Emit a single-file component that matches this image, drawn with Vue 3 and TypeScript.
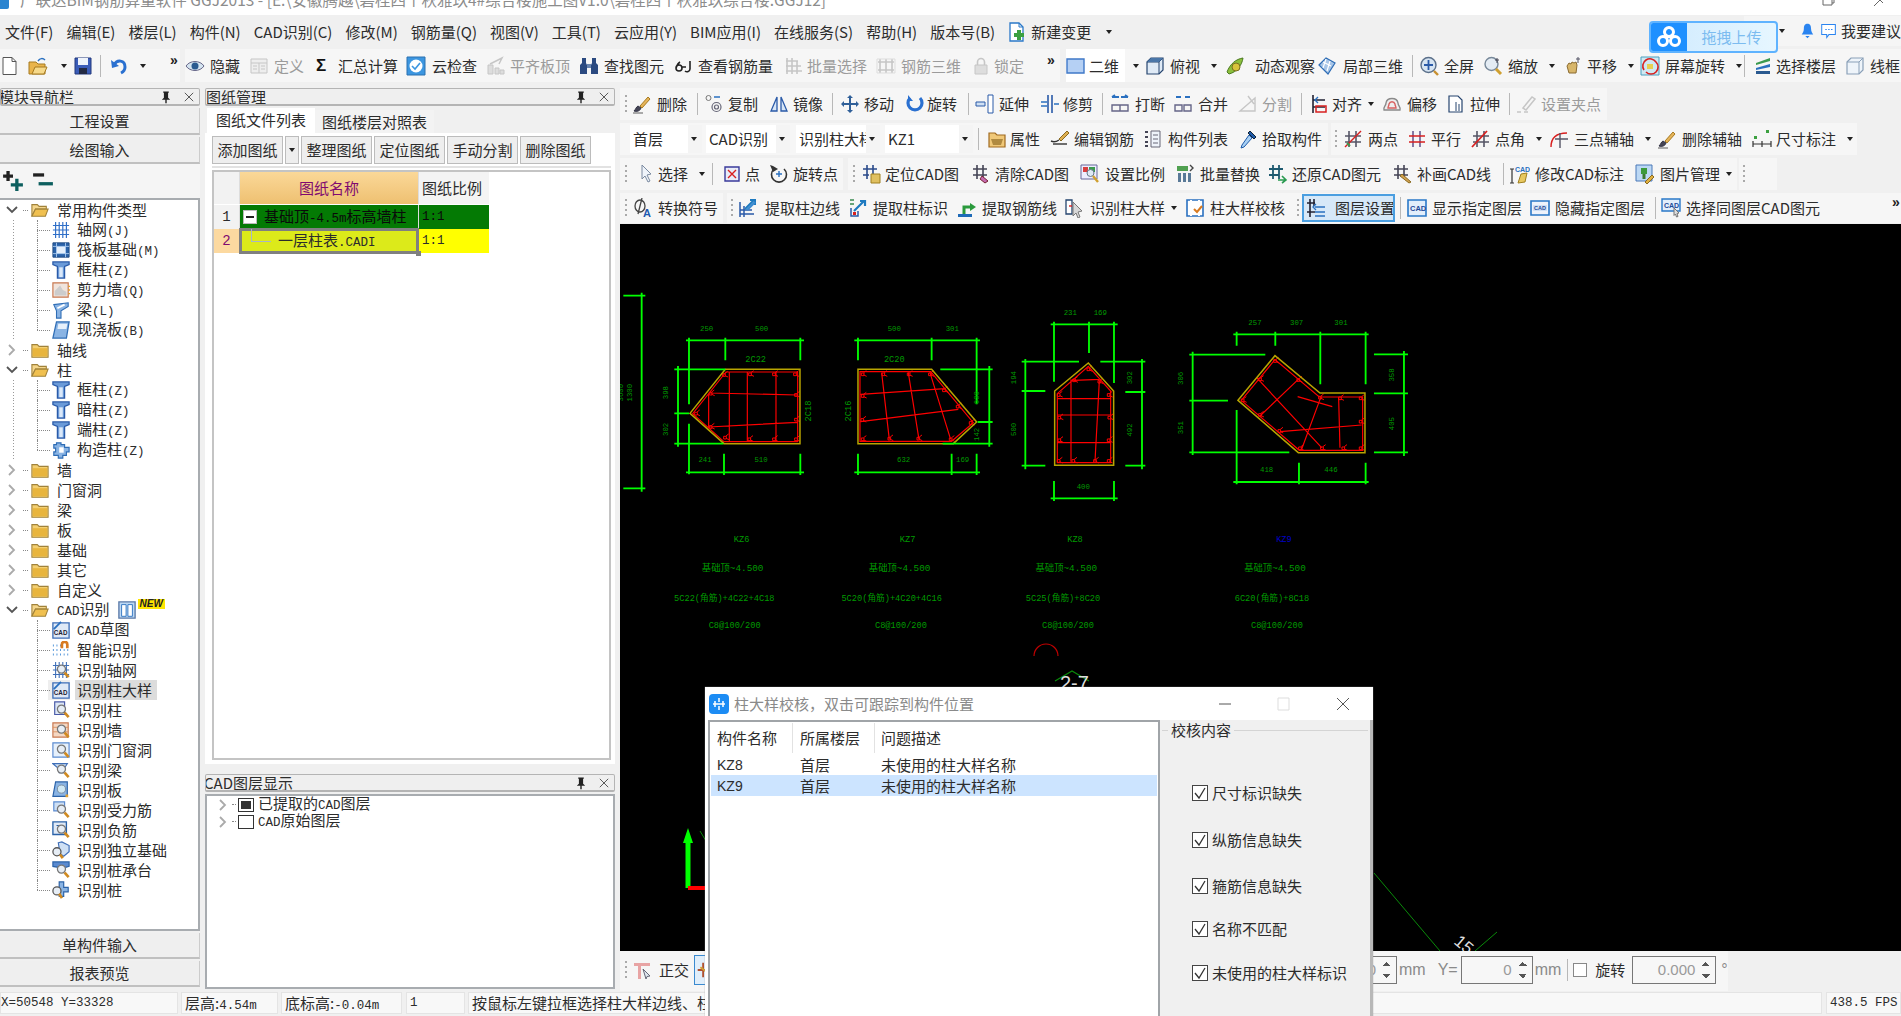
<script setup lang="ts">
import { h } from 'vue'

type Shape = (string | number)[]
const p = (d: string, f = '', s = '', w = 1): Shape => [d, f, s, w]
const txt = (x: number, y: number, size: number, t: string, f: string): Shape => ['T', x, y, size, t, f]

const B = '#2f6db5'
const O = '#e0a030'
const R = '#d82020'
const G = '#c6c6c6'
const lens = [p('M6 9a4.5 4.5 0 1 0 9 0a4.5 4.5 0 1 0-9 0z', '#e6edf5', '#777', 1.4), p('M14 13l4.5 5', '', '#d08a20', 3)]
const brush = [p('M2 17c3 1 6 0 7-3l-3-2c-2 1-2 3-4 5z', '#445', '#334'), p('M8 12l8-9 2 2-8 9z', '#e6b45a', '#a67a20'), p('M1 19h10', '', '#888', 1.4)]
const hash = (c: string) => [p('M6 2v16M13 2v16M2 7h16M2 13h16', '', c, 1.6)]

const icons: Record<string, Shape[]> = {
  new: [p('M3 1.5h9l4 4v13H3z', '#fff', '#555'), p('M12 1.5v4h4', '', '#555')],
  change: [p('M3 1h9l4 4v14H3z', '#fff', '#2a78c8', 1.3), p('M12 1v4h4', '', '#2a78c8'), p('M10 8h4v3h3v4h-3v3h-4v-3H7v-4h3z', '#3ca040')],
  pin: [p('M6 2h8v2h-1v7l3 3h-5v5H9v-5H4l3-3V4H6z', '#222')],
  close: [p('M4 4l12 12M16 4L4 16', '', '#555', 1.4)],
  open: [p('M1 6h7l2 2h7v10H1z', '#e9b44c', '#a67a20'), p('M4 18l3-7h12l-3 7z', '#f6d98a', '#a67a20'), p('M10 5c2-3 5-3 7-1', '', '#2a70c0', 1.5)],
  save: [p('M2 2h16v16H2z', '#3a5cb8', '#23397c'), p('M5 2h10v7H5z', '#eef3fb'), p('M6 12h8v6H6z', '#222a44')],
  undo: [p('M5 9c3-6 11-5 11 2 0 3-2 5-4 6', '', '#2a70d0', 3), p('M2 4l1 8 7-2z', '#2a70d0')],
  eye: [p('M1 10c4-6 14-6 18 0-4 6-14 6-18 0z', '#d5e4f0', '#668'), p('M6.5 10a3.5 3.5 0 1 0 7 0a3.5 3.5 0 1 0-7 0z', '#2a5a90')],
  def: [p('M2 3h16v14H2z', '#eee', G), p('M2 7h16M10 7v10M12 10h4M12 13h4M4 10h4M4 13h4', '', G)],
  cloud: [p('M1 1h18v18H1z', '#3c96e0', '#2a70b0'), p('M3.5 10a6.5 6.5 0 1 0 13 0a6.5 6.5 0 1 0-13 0z', '#fff'), p('M6 10l3 3 5-6', '', '#3c96e0', 1.6)],
  flat: [p('M2 18V9h5v9zM9 18v-6h4v6zM14 18v-4h4v4z', '#ddd', G), p('M4 8l12-6-3 6', '', G, 1.5)],
  find: [p('M3 2h4v5l1 2v9H1V9l2-2zM13 2h4v5l2 2v9h-7V9l1-2z', '#2b4a80'), p('M8 8h4v4H8z', '#6a86b0')],
  viewrebar: [p('M2 12a3 3 0 1 0 6 0a3 3 0 1 0-6 0M6 6c-2 1-3 3-4 6M8 11h4M16 5v8a3 3 0 0 1-5 2', '', '#222', 1.6)],
  batch: [p('M3 2v16M8 2v16M13 5v13M2 5h12M2 10h15M2 15h16', '', G, 1.6)],
  rebar3: [p('M4 3v14M10 3v14M16 3v14M2 6h16M2 14h16', '', G, 1.6), p('M1 3h18v14H1z', '', '#ddd')],
  lock: [p('M4 9h12v9H4z', '#ddd', G), p('M6.5 9V6a3.5 3.5 0 0 1 7 0v3', '', G, 1.6)],
  rect: [p('M1 3h17v14H1z', '#b5d0f4', '#3f78c8', 1.4)],
  box: [p('M2 6l4-4h12v12l-4 4H2z', '#dfeaf6', '#26456f', 1.2), p('M2 6h12v12M14 6l4-4', '', '#26456f'), p('M2 6l4-4h12l-4 4z', '#4a76a8')],
  orbit: [p('M2 16c3-8 9-13 16-14-1 7-6 14-14 16z', '#8cbf3c', '#4a7a20'), p('M7 11a4 4 0 1 0 8 0a4 4 0 1 0-8 0z', '#d8c33c', '#7a7020')],
  local3d: [p('M2 9l7-7 9 5-7 11z', '#a8c6e8', B, 1.2), p('M6 6l8 4M9 3l-3 9M13 5l-3 10', '', '#fff', 1.2)],
  full: [p('M2 9a7.5 7.5 0 1 0 15 0a7.5 7.5 0 1 0-15 0z', '#d6e4f2', '#5a6f8a', 1.4), p('M9.5 4v10M5 9h9', '', '#2a5aa8', 1.8), p('M15 15l4 4', '', '#c89030', 2.4)],
  zoom: [p('M2 8a6.5 6.5 0 1 0 13 0a6.5 6.5 0 1 0-13 0z', '#e4ecf4', '#789', 1.4), p('M13 13l5 5', '', '#d0a030', 3), p('M14 2v5M12 4h4', '', '#445')],
  hand: [p('M4 10l2-3 2 1 1-2 2 1 2-1 1 3-1 8H6z', '#d8b66a', '#8a6a30'), p('M15 1v6M13 3h4', '', '#556')],
  screen: [p('M1 1h18v18H1z', '#cfe8f2', '#4aa0c0'), p('M4 14a7 7 0 0 1 12-8M16 6a7 7 0 0 1-10 10', '', R, 1.6), p('M7 8h6v5H7z', '#e8d050')],
  layers: [p('M3 7l14-5v3L3 9z', '#3c9a50'), p('M3 12l14-4v3L3 14z', '#2a70c0'), p('M3 15h14v3H3z', '#2a5a90')],
  wire: [p('M2 6l4-4h12v12l-4 4H2z', '#eef4fa', '#8aa0b8', 1.2), p('M2 6h12v12M14 6l4-4', '', '#8aa0b8')],
  brush,
  brushg: brush,
  copy: [p('M3 4a2.5 2.5 0 1 0 5 0a2.5 2.5 0 1 0-5 0z', '', '#777'), p('M9 13a4.5 4.5 0 1 0 9 0a4.5 4.5 0 1 0-9 0zM11.500 13a2 2 0 1 0 4 0a2 2 0 1 0-4 0z', '', '#667', 1.2), p('M11 3h6', '', '#2a70c0', 1.5)],
  mirror: [p('M8 3v14H2zM12 3v14h6z', '#d8e6f6', '#2a5aa8', 1.3)],
  move: [p('M10 1l3 3h-2v5h5V7l3 3-3 3v-2h-5v5h2l-3 3-3-3h2v-5H4v2l-3-3 3-3v2h5V4H7z', '#2f5f98')],
  rotate: [p('M5 4a7 7 0 1 0 10 0', '', '#2a70d0', 3.2), p('M3 1v6h5z', '#2a70d0')],
  extend: [p('M1 8h9v4H1z', '#cfe0f4', '#2a5aa8'), p('M13 1h5v18h-5z', '#fff', '#2a5aa8')],
  trim: [p('M8 1v18M12 1v18', '', '#2a5aa8', 1.6), p('M1 8h6M1 12h6M14 10h5', '', '#2a70c0', 1.4)],
  break: [p('M2 3h7M11 3h7M2 3l3-2M18 3l-3-2', '', '#2a70c0', 1.8), p('M2 11h16v6H2zM10 11v6', '', '#668', 1.4)],
  merge: [p('M3 3l5 0M12 3h5', '', '#2a70c0', 1.8), p('M2 11h7v6H2zM11 11h7v6h-7z', '', '#668', 1.4)],
  split: [p('M2 17h15V4L2 17zM10 2l6 8', '', G, 1.4)],
  align: [p('M3 1v18M3 6h12M3 13h12', '', '#223', 1.6), p('M6 12h10v6H6z', '', R, 1.5), p('M8 3l-3 3 3 3', '', '#2a70c0', 1.4)],
  offset: [p('M2 16c-1-3 2-4 2-7 1-6 11-6 12 0 0 3 3 4 2 7z', '#eee', '#8a8a8a', 1.4), p('M6 14c0-2 1-2 1-4 1-3 5-3 6 0 0 2 1 2 1 4z', '', '#d86060', 1.4)],
  stretch: [p('M3 2h9l4 4v12H3z', '#fff', '#26456f', 1.2), p('M10 8v9M13 10v7', '', '#26456f', 1)],
  gripset: [p('M1 18h4M8 18h4M7 14L16 3l3 2-9 11z', '', G, 1.5)],
  prop: [p('M2 4h6l2 2h8v12H2z', '#f0c878', '#a06a20', 1.2), p('M4 10h12l-2 6H6z', '#b08a40')],
  edit: [p('M1 12c2 1 5 1 8-1', '', '#333', 1.4), p('M9 10l8-8 2 2-8 8z', '#e0b050', '#8a6a20'), p('M3 15h14', '', '#333', 1.4)],
  list: [p('M2 3h3M2 8h3M2 13h3M2 17h3', '', '#445', 2), p('M8 2h9v16H8z', '#eef3fa', '#667'), p('M10 6h5M10 10h5M10 14h5', '', '#667')],
  pick: [p('M12 2l6 6-2 2-6-6z', '#1e5aa8', '#123'), p('M11 6l3 3-8 9-3 1 1-3z', '#a8d0f4', '#1e5aa8')],
  two: [...hash('#556'), p('M2 18L18 2', '', '#d82020', 1.5), p('M4 14l3 3', '', '#3c9a50', 2)],
  parallel: [p('M6 2v16M13 2v16', '', '#6a5a90', 1.6), p('M2 7h16M2 13h16', '', R, 1.6)],
  angle: [...hash('#556'), p('M1 18L16 2', '', R, 1.8)],
  three: [p('M2 18c0-9 5-14 16-14', '', R, 1.4), p('M11 4v15M6 10h13', '', '#556', 1.4)],
  dim: [p('M2 7h3v3H2zM14 1h3v3h-3z', '#3ca040'), p('M1 15h18M1 12v6M10 12v6M19 12v6', '', '#333', 1.2)],
  cursor: [p('M5 1l9 9-4 1 3 6-2 1-3-6-3 3z', '#eef3fa', '#7a8aa0')],
  point: [p('M3 3h14v14H3z', '#e8ecf8', '#3a3a9a', 1.4), p('M6 6l8 8M14 6l-8 8', '', R, 1.4)],
  rotpt: [p('M5 5a7.500 7.500 0 1 0 10 0', '', '#333', 1.6), p('M1 1l3 1 5 3-5 3z', '#333'), p('M10 7v6M7 10h6', '', '#2a70c0', 1.4)],
  locate: [p('M5 1v14M11 1v14M1 5h14M1 11h6', '', '#2a4a8a', 1.6), p('M9 10h9v9H9z', '#e0c060', '#a08020')],
  clear: [p('M5 1v14M11 1v14M1 5h14M1 11h14', '', '#445', 1.6), p('M10 12l6 5-3 2-5-4z', '#c46ab0', '#723')],
  scale: [p('M1 1h16v14H1z', '#eef', '#669'), p('M3 3h5v5H3z', '#d84040'), p('M9 3h6v5H9z', '#3c9a50'), p('M7 9a3.500 3.500 0 1 0 7 0a3.500 3.500 0 1 0-7 0z', '#dfeaf6', '#678'), p('M13 12l5 6', '', '#d0a030', 2.4)],
  replace: [p('M2 2h11v5H2z', '#50a050'), p('M3 9h3v9H3zM8 9h3v9H8zM13 9h3v9h-3z', '#5a7a98'), p('M15 1l3 3-3 3', '', '#444', 1.4)],
  restore: [p('M5 1v14M11 1v14M1 5h14M1 11h10', '', '#1e5a70', 1.8), p('M10 16h8M14 12l4 4-4 3', '', '#2a9a50', 1.6)],
  patch: [p('M5 1v14M11 1v14M1 5h14M1 11h14', '', '#445', 1.6), p('M9 10l9 8-2 1-9-7z', '#d0a050', '#8a6a20')],
  modcad: [p('M2 5v14M0 5h4M0 19h4', '', '#333', 1.2), txt(5, 8, 7, 'CAD', '#2a70c0'), p('M8 19l3-9 6-1-2 9z', '#e8c860', '#a08020')],
  pics: [p('M1 1h16v16H1z', '#bcd8f4', '#4a78b8'), p('M6 4h6v6H6z', '#3c9a3c'), p('M9 10v5', '', '#3c7a30', 3), p('M10 18l7-7 2 2-7 7z', '#e0b040', '#8a6a20')],
  phi: [p('M2 8a5 6 0 1 0 10 0a5 6 0 1 0-10 0zM9 0L5 16', '', '#444', 1.3), txt(10, 19, 11, 'A', '#1e5ab0')],
  pull1: [p('M2 19V4M6 19V8M2 12h12M2 16h14', '', '#2a5aa8', 1.5), p('M7 11L16 2M12 2h5v5', '', '#1e7ac0', 2), p('M9 12l8-8', '', '#3a8ad0', 2.4)],
  pull2: [p('M2 2h4M2 6h4', '', '#3a8a50', 1.4), p('M3 10v8h7v-5', '', '#2a5aa8', 1.5), p('M6 13L16 3M12 3h5v5', '', '#1e7ac0', 2.2), p('M5 14h3v3H5z', R)],
  pull3: [p('M1 16h14v3H1z', '#1e6ab8'), p('M7 16V9h7', '', '#2a9a3c', 3), p('M13 5l6 4-6 4z', '#2a9a3c')],
  ident: [p('M2 2h6v14H2z', '#fff', '#26456f', 1.3), p('M5 8h3', '', R, 1.4), p('M9 4l9 9-4 1 2 5-2 1-2-5-3 3z', '#d8d8d8', '#777')],
  check: [p('M2 2h16v16H2z', '#fff', '#2a70c0', 1.6), p('M6 2v3M14 2v3M6 15v3M14 15v3', '', '#fff', 2), p('M9 11l3 3 5-6', '', '#d87a20', 2)],
  layerset: [p('M4 1v18M8 1v7M1 5h8M1 14h8', '', '#223', 1.6), p('M10 6l-3 3 3 3M9 9h10M9 14h10M9 18h10', '', '#2a70c0', 1.3)],
  showcad: [p('M1 2h18v16H1z', '#e2eefb', '#2a78c8', 1.6), txt(3, 13, 7.5, 'CAD', '#1e4a98')],
  hidecad: [p('M1 3h18v14H1z', '#eef3fb', '#2a78c8', 1.6), p('M3 7h14v6H3z', '#d0e0f4'), txt(4, 12, 5.5, 'CAD', '#1e4a98')],
  selcad: [p('M1 1h18v12H1z', '#e2eefb', '#2a78c8', 1.4), txt(3, 10, 7, 'CAD', '#1e4a98'), p('M13 10l5 5-2 .5 1 3-1.500 .5-1-3-1.500 1.500z', '#ddd', '#777')],
  ortho: [p('M1 3h16v3H8v13H5V6H1z', '#e8a4a4'), p('M10 9l7 7-3 .5-1 2.500z', '#dfe8f0', '#667')],
  toggle: [p('M9 2v16M3 10h8', '', '#b05030', 2), p('M6 7l8 6', '', '#d0a030', 2)],

  folderClosed: [p('M1 4h6l2 2h10v12H1z', '#f3cf72', '#a0823a', 1.2), p('M2 8h16v9H2z', '#e8b53e')],
  folderOpen: [p('M1 4h6l2 2h8v3H5L1 17z', '#f4d68c', '#a0823a', 1.2), p('M5 9h14l-3 8H1z', '#f0c050', '#a0823a', 1.2)],
  tAxis: [p('M4 1v18M8 1v18M12 1v18M16 1v18M1 5h18M1 10h18M1 15h18', '', '#2f6fc8', 1.3)],
  tRaft: [p('M1 2h18v16H1z', '#2a62a8', '#1e4a80'), p('M5 6h10v8H5z', '#e6f0fb'), p('M1 6h18M1 14h18M5 2v16M15 2v16', '', '#a9c9ee', 1)],
  tCol: [p('M1 1h18v3l-5 2v13H6V6L1 4z', '#6a9ad8', '#2a5aa8', 1.4), p('M8 7h4v11H8z', '#dbe9fa')],
  tWall: [p('M1 2h17v16H1z', '#f0e4dc', '#c87850', 1.3), p('M3 16h13v-4l-4-2-3-5-6 6z', '#ccc'), p('M18 6h2M18 10h2M18 14h2', '', O, 1.5)],
  tBeam: [p('M2 4l16-2v4l-8 5v8H5v-8z', '#8ab4e4', B, 1.2), p('M6 8l8-4', '', '#fff', 2)],
  tSlab: [p('M5 1h14l-3 18H1z', '#8ab4e4', B, 1.4), p('M7 3h10l-1 6H6z', '#e6f0fb')],
  tStruct: [p('M5 2h5v2h4v3h5v5h-3v4h-4v3H7v-3H2v-4h2V8H2V4h3z', '#8ab4e4', B, 1.3), p('M8 7h5v6H8z', '#fff')],
  tCad: [p('M1 2h18v17H1z', '#dfe9f6', '#3f6fb8', 1.5), txt(2, 16, 7, 'CAD', '#223'), p('M2 9l8-8', '', '#2a70c0', 2)],
  tSmart: [p('M1 5h1M5 5h1M9 5h1M1 10h1M5 10h1M9 10h1M13 10h1M17 10h1M1 15h1M5 15h1M9 15h1M13 15h1M17 15h1', '', '#4a90d8', 2), p('M11 8V4a3 3 0 0 1 6 0v4', '', '#d87a20', 3)],
  tGridLens: [p('M4 1v18M8 1v18M12 1v18M16 1v18M1 5h18M1 10h18M1 15h18', '', '#3f6fb8', 1.2), ...lens],
  tColLens: [p('M3 1h11v14H3z', '#dde7f6', '#4a5aa8', 1.3), ...lens],
  tWallLens: [p('M1 2h17v16H1z', '#f4d8c4', '#c87850', 1.3), p('M1 7h17M1 12h17', '', '#d89060'), ...lens],
  tDoorLens: [p('M1 2h18v16H1z', '#e6f0fb', '#5a8ad0', 1.3), ...lens],
  tBeamLens: [p('M1 3h16l-4 6v4H8V9z', '#cfe0f4', '#3f6fb8', 1.3), ...lens],
  tSlabLens: [p('M4 1h13v16H1z', '#8ab4e4', '#2a62a8', 1.3), p('M6 9a4.500 4.500 0 1 0 9 0a4.500 4.500 0 1 0-9 0z', '#cfe8f4', '#789'), p('M15 15h3v3h-3z', O)],
  tRebarLens: [p('M2 1h12v10H2z', '#cfe0f4', '#5a8ad0', 1.3), ...lens],
  tNegLens: [p('M1 1h15v14H1z', '#dfe9f6', '#2a62a8', 1.5), p('M5 5h6v4', '', '#2a62a8', 1.3), ...lens],
  tFoundLens: [p('M7 2l4-1 8 4v7l-6 5-4-3z', '#cfe0f4', '#3f6fb8', 1.3), p('M1 12a4.500 4.500 0 1 0 9 0a4.500 4.500 0 1 0-9 0z', '#e6edf5', '#555', 1.4), p('M9 15l3 4', '', '#d08a20', 3)],
  tCapLens: [p('M1 1h18v5l-7 2v2H7V7L1 6z', '#5a8ad0', '#2a62a8', 1.3), ...lens],
  tPileLens: [p('M8 1h5v6h5v5h-5v5H8z', '#8ab4e4', '#2a62a8', 1.3), p('M1 11a4.500 4.500 0 1 0 9 0a4.500 4.500 0 1 0-9 0z', '#e6edf5', '#555', 1.4), p('M8 14l3 5', '', '#d08a20', 3)],
  tPanels: [p('M1 1h18v18H1z', '#bcd8f4', '#5a7aa8', 1.5), p('M4 4h5v13H4zM11 4h5v13h-5z', '#fff', '#2a70c0')],
  plus: [p('M4 1h3v3h3v3H7v3H4V7H1V4h3z', '#222'), p('M12 8h3v4h4v3h-4v4h-3v-4H8v-3h4z', '#0d5f5f')],
  minus: [p('M1 3h10v3H1z', '#222'), p('M6 11h13v3H6z', '#0d5f5f')],
}

const Ico = (props: { n: string; s?: number }) =>
  h(
    'svg',
    { width: props.s ?? 20, height: props.s ?? 20, viewBox: '0 0 20 20', class: 'ico' },
    (icons[props.n] ?? []).map((a) =>
      a[0] === 'T'
        ? h('text', { x: a[1], y: a[2], 'font-size': a[3], fill: a[5], 'font-family': 'Liberation Sans', 'font-weight': 700 }, String(a[4]))
        : h('path', { d: String(a[0]), fill: String(a[1]) || 'none', stroke: String(a[2]) || 'none', 'stroke-width': a[3] }),
    ),
  )

interface Item {
  x: number
  k?: 'sep' | 'grip' | 'more' | 'combo'
  tx?: number
  t?: string
  i?: string
  g?: string
  c?: boolean
  tight?: boolean
  dis?: boolean
  on?: boolean
  w?: number
}
interface Band {
  x: number
  end: number
  items: Item[]
}

const b = (x: number, tx: number, t: string, i: string, extra: Partial<Item> = {}): Item => ({ x, tx, t, i, ...extra })
const sep = (x: number): Item => ({ x, k: 'sep' })
const grip = (x: number): Item => ({ x, k: 'grip' })
const more = (x: number): Item => ({ x, k: 'more' })
const combo = (x: number, w: number, t: string): Item => ({ x, k: 'combo', w, t })
const dis = { dis: true }
const c = { c: true }
const ct = { c: true, tight: true }

const row1: Band[] = [
  { x: 0, end: 180, items: [b(0, 22, '', 'new'), b(28, 50, '', 'open', c), b(73, 93, '', 'save'), sep(100), b(109, 129, '', 'undo', c), more(170)] },
  {
    x: 185,
    end: 1060,
    items: [
      b(189, 214, '隐藏', 'eye'),
      b(253, 278, '定义', 'def', dis),
      { x: 318, tx: 342, t: '汇总计算', g: 'Σ' },
      b(410, 436, '云检查', 'cloud'),
      b(490, 514, '平齐板顶', 'flat', dis),
      b(583, 608, '查找图元', 'find'),
      b(678, 702, '查看钢筋量', 'viewrebar'),
      b(788, 811, '批量选择', 'batch', dis),
      b(880, 905, '钢筋三维', 'rebar3', dis),
      b(975, 998, '锁定', 'lock', dis),
      more(1051),
    ],
  },
  {
    x: 1066,
    end: 1901,
    items: [
      b(1071, 1094, '二维', 'rect', c),
      b(1150, 1175, '俯视', 'box', c),
      b(1230, 1260, '动态观察', 'orbit'),
      b(1322, 1348, '局部三维', 'local3d'),
      sep(1417),
      b(1424, 1449, '全屏', 'full'),
      b(1488, 1513, '缩放', 'zoom', c),
      b(1568, 1592, '平移', 'hand', c),
      b(1645, 1670, '屏幕旋转', 'screen', ct),
      sep(1749),
      b(1758, 1781, '选择楼层', 'layers'),
      b(1850, 1875, '线框', 'wire'),
    ],
  },
]

const rows: Band[][] = [
  [
    {
      x: 620,
      end: 1607,
      items: [
        grip(625),
        b(632, 657, '删除', 'brush'),
        sep(697),
        b(703, 728, '复制', 'copy'),
        b(769, 793, '镜像', 'mirror'),
        sep(832),
        b(840, 864, '移动', 'move'),
        b(905, 927, '旋转', 'rotate'),
        sep(968),
        b(975, 999, '延伸', 'extend'),
        b(1040, 1063, '修剪', 'trim'),
        sep(1102),
        b(1110, 1135, '打断', 'break'),
        b(1173, 1198, '合并', 'merge'),
        b(1238, 1262, '分割', 'split', dis),
        sep(1301),
        b(1310, 1332, '对齐', 'align', ct),
        b(1382, 1407, '偏移', 'offset'),
        b(1446, 1470, '拉伸', 'stretch'),
        sep(1509),
        b(1516, 1541, '设置夹点', 'gripset', dis),
      ],
    },
  ],
  [
    {
      x: 620,
      end: 1328,
      items: [
        combo(630, 72, '首层'),
        combo(706, 84, 'CAD识别'),
        combo(796, 84, '识别柱大样'),
        combo(885, 88, 'KZ1'),
        sep(978),
        b(987, 1010, '属性', 'prop'),
        b(1050, 1074, '编辑钢筋', 'edit'),
        b(1143, 1168, '构件列表', 'list'),
        b(1238, 1262, '拾取构件', 'pick'),
      ],
    },
    {
      x: 1331,
      end: 1857,
      items: [
        grip(1335),
        b(1343, 1368, '两点', 'two'),
        b(1407, 1431, '平行', 'parallel'),
        b(1471, 1495, '点角', 'angle', c),
        b(1549, 1574, '三点辅轴', 'three', c),
        b(1657, 1682, '删除辅轴', 'brushg'),
        b(1752, 1776, '尺寸标注', 'dim', c),
      ],
    },
  ],
  [
    { x: 620, end: 843, items: [grip(625), b(637, 658, '选择', 'cursor', c), sep(712), b(722, 745, '点', 'point'), b(769, 793, '旋转点', 'rotpt')] },
    {
      x: 848,
      end: 1737,
      items: [
        grip(853),
        b(862, 885, '定位CAD图', 'locate'),
        b(972, 995, '清除CAD图', 'clear'),
        b(1080, 1105, '设置比例', 'scale'),
        b(1175, 1200, '批量替换', 'replace'),
        b(1268, 1292, '还原CAD图元', 'restore'),
        b(1393, 1417, '补画CAD线', 'patch'),
        sep(1503),
        b(1510, 1535, '修改CAD标注', 'modcad'),
        b(1635, 1660, '图片管理', 'pics', ct),
      ],
    },
    { x: 1739, end: 1777, items: [grip(1743)] },
  ],
  [
    { x: 620, end: 723, items: [grip(625), b(633, 658, '转换符号', 'phi')] },
    {
      x: 727,
      end: 1901,
      items: [
        grip(731),
        b(738, 765, '提取柱边线', 'pull1'),
        b(848, 873, '提取柱标识', 'pull2'),
        b(957, 982, '提取钢筋线', 'pull3'),
        b(1064, 1090, '识别柱大样', 'ident', ct),
        b(1185, 1210, '柱大样校核', 'check'),
        grip(1297),
        b(1302, 1331, '图层设置', 'layerset', { on: true, w: 93 }),
        sep(1400),
        b(1407, 1432, '显示指定图层', 'showcad'),
        b(1530, 1555, '隐藏指定图层', 'hidecad'),
        sep(1655),
        b(1661, 1686, '选择同图层CAD图元', 'selcad'),
        more(1892),
      ],
    },
  ],
]

const width = (list: Item[], idx: number, end: number) => (idx + 1 < list.length ? list[idx + 1].x : end) - list[idx].x
const gapBefore = (list: Band[], idx: number, base: number) => list[idx].x - (idx ? list[idx - 1].end : base)

const menus = ['文件(F)', '编辑(E)', '楼层(L)', '构件(N)', 'CAD识别(C)', '修改(M)', '钢筋量(Q)', '视图(V)', '工具(T)', '云应用(Y)', 'BIM应用(I)', '在线服务(S)', '帮助(H)', '版本号(B)']

// text helper: the tree and grid use a fixed pitch latin next to the CJK glyphs
const parts = (s: string) => s.match(/[\x20-\x7e]+|[^\x20-\x7e]+/g) ?? []
const isLat = (s: string) => /^[\x20-\x7e]/.test(s)

interface Node {
  t: string
  i: string
  lv: 0 | 1
  open?: boolean
  last?: boolean
  guide?: boolean
  sel?: boolean
  badge?: boolean
}
const leaf = (t: string, i: string, extra: Partial<Node> = {}): Node => ({ t, i, lv: 1, ...extra })
const dir = (t: string, open = false, extra: Partial<Node> = {}): Node => ({ t, i: open ? 'folderOpen' : 'folderClosed', lv: 0, open, ...extra })
const g = { guide: true }
const tree: Node[] = [
  dir('常用构件类型', true),
  leaf('轴网(J)', 'tAxis', g),
  leaf('筏板基础(M)', 'tRaft', g),
  leaf('框柱(Z)', 'tCol', g),
  leaf('剪力墙(Q)', 'tWall', g),
  leaf('梁(L)', 'tBeam', g),
  leaf('现浇板(B)', 'tSlab', { guide: true, last: true }),
  dir('轴线'),
  dir('柱', true),
  leaf('框柱(Z)', 'tCol', g),
  leaf('暗柱(Z)', 'tCol', g),
  leaf('端柱(Z)', 'tCol', g),
  leaf('构造柱(Z)', 'tStruct', { guide: true, last: true }),
  dir('墙'),
  dir('门窗洞'),
  dir('梁'),
  dir('板'),
  dir('基础'),
  dir('其它'),
  dir('自定义'),
  dir('CAD识别', true, { badge: true }),
  leaf('CAD草图', 'tCad'),
  leaf('智能识别', 'tSmart'),
  leaf('识别轴网', 'tGridLens'),
  leaf('识别柱大样', 'tCad', { sel: true }),
  leaf('识别柱', 'tColLens'),
  leaf('识别墙', 'tWallLens'),
  leaf('识别门窗洞', 'tDoorLens'),
  leaf('识别梁', 'tBeamLens'),
  leaf('识别板', 'tSlabLens'),
  leaf('识别受力筋', 'tRebarLens'),
  leaf('识别负筋', 'tNegLens'),
  leaf('识别独立基础', 'tFoundLens'),
  leaf('识别桩承台', 'tCapLens'),
  leaf('识别桩', 'tPileLens', { last: true }),
]

const sheetTools = ['整理图纸', '定位图纸', '手动分割', '删除图纸']
const dlgRows = [
  { n: 'KZ8', f: '首层', d: '未使用的柱大样名称' },
  { n: 'KZ9', f: '首层', d: '未使用的柱大样名称', on: true },
]
const checks = [
  { t: '尺寸标识缺失', h: 47 },
  { t: '纵筋信息缺失', h: 46 },
  { t: '箍筋信息缺失', h: 43 },
  { t: '名称不匹配', h: 44 },
  { t: '未使用的柱大样标识', h: 30 },
]

// drawing geometry, in the drawing's own units of a third of a pixel
const dots = (pts: number[][]) => pts.map(([x, y]) => `M${x - 4} ${y - 4}h8v8h-8zM${x + 3} ${y - 5}l8-6M${x + 3} ${y + 2}l9 4`).join('')

const leftGreen =
  'M10 74H76M65 65V662M10 652H76' +
  'M198 208H552M207 200V400M316 200V268M541 200V268M174 285V527M163 295H316M163 427H207M163 518H310M207 458V610M198 604H552M312 548V612M541 548V612' +
  'M703 208H1080M714 200V268M935 200V268M1070 200V400M1108 285V527M961 295H1118M1073 453H1118M968 518H1118M703 604H1080M714 548V612M995 548V612M1070 548V612'
const leftYellow = 'M316 295H540V518H312L210 427ZM714 295H935L1070 453L1000 518H714Z'
const leftRed =
  'M318 303H533V512H312L218 428ZM328 303V510M382 303V510M468 303V510M270 366L532 372M266 368V468M266 468L532 454' +
  'M720 302H932L1060 455L995 511H720ZM722 370L975 353M722 452L1015 415M785 305L808 505M865 305L897 505M930 305L992 505'
const leftDots = dots([[312, 312], [390, 310], [462, 310], [525, 310], [272, 368], [228, 428], [272, 468], [315, 500], [388, 505], [462, 505], [528, 505], [528, 372], [528, 446], [728, 310], [790, 310], [866, 310], [930, 310], [728, 375], [727, 447], [728, 505], [808, 503], [895, 503], [992, 505], [1013, 407], [1052, 456], [972, 358]])
const rightGreen =
  'M152 160H353M162 152V332M267 152V246M342 152V336M76 264V595M65 272H237M65 360H136M65 584H136M426 264V595M301 272H436M376 363H436M376 584H436M152 682H353M162 630V690M342 630V690' +
  'M700 190H1106M710 182V224M826 182V224M961 182V340M1097 182V340M578 242V552M568 251H796M568 389H684M568 544H868M710 417V640M700 633H1106M897 575V640M1097 575V640M1122 250H1224M1122 367H1224M1122 544H1224M1212 240V555'
const rightYellow = 'M164 360L265 276L341 360V583H164ZM714 388L825 254L960 366H1095V545H895Z'
const rightRed =
  'M172 368L265 286L332 360V575H172ZM172 383H332M172 432H332M172 515H332M213 325V572M298 330L285 572M220 328L298 325' +
  'M724 388L825 266L958 378H1088V538H898ZM770 320L965 530M895 325L780 435M893 377L997 407M962 380L905 535M840 482L1085 462M1016 380L1020 530'
const rightDots = dots([[265, 295], [222, 328], [298, 332], [176, 372], [326, 372], [178, 440], [328, 440], [178, 508], [326, 508], [176, 570], [220, 570], [285, 570], [326, 570], [825, 270], [780, 325], [895, 327], [780, 432], [728, 388], [838, 480], [960, 380], [1020, 382], [1082, 382], [1082, 452], [900, 532], [966, 532], [1030, 532], [1082, 532]])

interface Lbl {
  x: number
  y: number
  t: string
  r?: boolean
  cls?: string
}
const leftText: Lbl[] = [
  { x: 30, y: 365, t: '1300', r: true }, { x: 2, y: 365, t: '3600', r: true },
  { x: 260, y: 175, t: '250' }, { x: 425, y: 175, t: '500' }, { x: 407, y: 266, t: '2C22', cls: 'lb' }, { x: 566, y: 420, t: '2C18', r: true, cls: 'lb' }, { x: 139, y: 365, t: '398', r: true }, { x: 139, y: 475, t: '302', r: true }, { x: 255, y: 568, t: '241' }, { x: 423, y: 568, t: '510' },
  { x: 823, y: 175, t: '500' }, { x: 997, y: 175, t: '301' }, { x: 823, y: 266, t: '2C20', cls: 'lb' }, { x: 688, y: 420, t: '2C16', r: true, cls: 'lb' }, { x: 1072, y: 380, t: '600', r: true }, { x: 1072, y: 490, t: '142', r: true }, { x: 851, y: 568, t: '632' }, { x: 1028, y: 568, t: '169' },
  { x: 365, y: 806, t: 'KZ6', cls: 'lb' }, { x: 338, y: 892, t: '基础顶~4.500', cls: 'md' }, { x: 313, y: 983, t: '5C22(角筋)+4C22+4C18', cls: 'lb' }, { x: 344, y: 1065, t: 'C8@100/200', cls: 'lb' },
  { x: 863, y: 806, t: 'KZ7', cls: 'lb' }, { x: 839, y: 892, t: '基础顶~4.500', cls: 'md' }, { x: 815, y: 983, t: '5C20(角筋)+4C20+4C16', cls: 'lb' }, { x: 843, y: 1065, t: 'C8@100/200', cls: 'lb' },
]
const rightText: Lbl[] = [
  { x: 211, y: 126, t: '231' }, { x: 301, y: 126, t: '169' }, { x: 41, y: 320, t: '194', r: true }, { x: 41, y: 475, t: '500', r: true }, { x: 391, y: 320, t: '302', r: true }, { x: 391, y: 477, t: '492', r: true }, { x: 250, y: 648, t: '400' },
  { x: 765, y: 156, t: '257' }, { x: 890, y: 156, t: '307' }, { x: 1023, y: 156, t: '301' }, { x: 543, y: 322, t: '306', r: true }, { x: 543, y: 470, t: '351', r: true }, { x: 800, y: 598, t: '418' }, { x: 993, y: 598, t: '446' }, { x: 1176, y: 312, t: '358', r: true }, { x: 1176, y: 458, t: '405', r: true },
  { x: 225, y: 806, t: 'KZ8', cls: 'lb' }, { x: 199, y: 892, t: '基础顶~4.500', cls: 'md' }, { x: 189, y: 983, t: '5C25(角筋)+8C20', cls: 'lb' }, { x: 204, y: 1065, t: 'C8@100/200', cls: 'lb' },
  { x: 852, y: 806, t: 'KZ9', cls: 'lb blue' }, { x: 825, y: 892, t: '基础顶~4.500', cls: 'md' }, { x: 816, y: 983, t: '6C20(角筋)+8C18', cls: 'lb' }, { x: 831, y: 1065, t: 'C8@100/200', cls: 'lb' },
]
const sets = [
  { tf: 'translate(620 270) scale(.3333)', green: leftGreen, yellow: leftYellow, red: leftRed, dots: leftDots, text: leftText },
  { tf: 'translate(1000 270) scale(.3333)', green: rightGreen, yellow: rightYellow, red: rightRed, dots: rightDots, text: rightText },
]
</script>

<template>
  <div class="app">
    <div class="titlebar">
      <span class="app-icon"></span>
      <span class="title-text">广联达BIM钢筋算量软件 GGJ2013 - [E:\安徽腾越\碧桂四个秋雅玖4#综合楼施工图V1.0\碧桂四个秋雅玖综合楼.GGJ12]</span>
      <svg class="win-ctl" width="80" height="15" viewBox="0 0 80 15">
        <path d="M20 0v5h9V0M29 3h2V0" fill="none" stroke="#666" />
        <path d="M71 6l6-6 6 6" fill="none" stroke="#666" />
      </svg>
    </div>

    <div class="menubar">
      <span v-for="m in menus" :key="m" class="menu">{{ m }}</span>
      <span class="menu change"><Ico n="change" :s="20" />新建变更<i class="caret"></i></span>
      <div class="menu-right">
        <i class="caret"></i>
        <svg class="bell" width="18" height="22" viewBox="0 0 18 22"><path d="M9 1c4 0 5 3 5 7 0 4 2 6 3 8H1c1-2 3-4 3-8 0-4 1-7 5-7zM6 18h6l-3 3z" fill="#2a84f0" /></svg>
        <svg class="chat" width="21" height="22" viewBox="0 0 21 22"><path d="M1 2h19v14h-9l-3 4v-4H1z" fill="#fff" stroke="#2a84f0" stroke-width="1.4" /><path d="M6 9h2M10 9h2M14 9h2" stroke="#2a84f0" stroke-width="1.4" /></svg>
        <span class="suggest">我要建议</span>
      </div>
    </div>

    <div class="tb-row first">
      <div v-for="(band, bi) in row1" :key="band.x" class="band" :style="{ width: band.end - band.x + 'px', marginLeft: gapBefore(row1, bi, 0) + 'px' }">
        <template v-for="(it, ii) in band.items" :key="it.x">
          <div class="slot" :style="{ width: width(band.items, ii, band.end) + 'px' }">
            <span v-if="it.k === 'sep'" class="sep"></span>
            <span v-else-if="it.k === 'more'" class="more">»</span>
            <div v-else class="tool" :class="{ dis: it.dis, white: it.x === 1071 }">
              <span class="ico-slot" :style="{ width: (it.tx ?? 0) - it.x + 'px' }">
                <b v-if="it.g" class="sigma">{{ it.g }}</b>
                <Ico v-else-if="it.i" :n="it.i" />
              </span>
              <span v-if="it.t">{{ it.t }}</span>
              <i v-if="it.c" class="caret"></i>
            </div>
          </div>
        </template>
      </div>
    </div>

    <div class="main">
      <aside class="nav">
        <header class="pane-head nav-head">
          <span>模块导航栏</span>
          <span class="pane-ctl"><Ico n="pin" :s="14" /><Ico n="close" :s="14" /></span>
        </header>
        <button class="nav-btn">工程设置</button>
        <button class="nav-btn">绘图输入</button>
        <div class="nav-tools"><Ico n="plus" :s="22" /><Ico n="minus" :s="22" /></div>
        <div class="tree">
          <div v-for="(n, ni) in tree" :key="ni" class="node" :class="['lv' + n.lv, { last: n.last, guide: n.guide, sel: n.sel }]">
            <template v-if="n.lv === 0">
              <svg class="chev" width="12" height="12" viewBox="0 0 12 12">
                <path v-if="n.open" d="M1 3l5 5 5-5" fill="none" stroke="#555" stroke-width="1.8" />
                <path v-else d="M3 1l5 5-5 5" fill="none" stroke="#aaa" stroke-width="1.8" />
              </svg>
              <i class="dash"></i>
            </template>
            <Ico :n="n.i" :s="18" />
            <span class="node-t"><template v-for="(s, si) in parts(n.t)" :key="si"><span :class="{ lat: isLat(s) }">{{ s }}</span></template></span>
            <template v-if="n.badge">
              <Ico class="panels" n="tPanels" :s="18" />
              <em class="new-tag">NEW</em>
            </template>
          </div>
        </div>
        <button class="nav-btn foot">单构件输入</button>
        <button class="nav-btn foot">报表预览</button>
      </aside>

      <section class="mid">
        <header class="pane-head">
          <span>图纸管理</span>
          <span class="pane-ctl"><Ico n="pin" :s="14" /><Ico n="close" :s="14" /></span>
        </header>
        <div class="tabs">
          <span class="tab on">图纸文件列表</span>
          <span class="tab">图纸楼层对照表</span>
        </div>
        <div class="sheet-pane">
          <div class="sheet-tools">
            <button class="sheet-btn">添加图纸</button>
            <button class="sheet-btn narrow"><i class="caret"></i></button>
            <button v-for="s in sheetTools" :key="s" class="sheet-btn">{{ s }}</button>
          </div>
          <div class="grid-box">
            <div class="g-row head">
              <span class="g-num"></span>
              <span class="g-name">图纸名称</span>
              <span class="g-ratio">图纸比例</span>
            </div>
            <div class="g-row r1">
              <span class="g-num">1</span>
              <span class="g-name"><i class="minus-box"></i><span>基础顶<span class="lat">-4.5m</span>标高墙柱</span></span>
              <span class="g-ratio lat">1:1</span>
            </div>
            <div class="g-row r2">
              <span class="g-num">2</span>
              <span class="g-name"><i class="branch"></i><span>一层柱表<span class="lat">.CADI</span></span><i class="handle"></i></span>
              <span class="g-ratio lat">1:1</span>
            </div>
          </div>
        </div>
        <header class="pane-head second">
          <span>CAD图层显示</span>
          <span class="pane-ctl"><Ico n="pin" :s="14" /><Ico n="close" :s="14" /></span>
        </header>
        <div class="layer-box">
          <div class="layer">
            <svg class="chev" width="12" height="12" viewBox="0 0 12 12"><path d="M3 1l5 5-5 5" fill="none" stroke="#aaa" stroke-width="1.8" /></svg>
            <i class="dash"></i><span class="l-check mixed"></span><span>已提取的<span class="lat">CAD</span>图层</span>
          </div>
          <div class="layer">
            <svg class="chev" width="12" height="12" viewBox="0 0 12 12"><path d="M3 1l5 5-5 5" fill="none" stroke="#aaa" stroke-width="1.8" /></svg>
            <i class="dash"></i><span class="l-check"></span><span><span class="lat">CAD</span>原始图层</span>
          </div>
        </div>
      </section>

      <section class="work">
        <div v-for="(row, ri) in rows" :key="ri" class="tb-row" :class="{ thin: ri === 3 }">
          <div v-for="(band, bi) in row" :key="band.x" class="band" :style="{ width: band.end - band.x + 'px', marginLeft: gapBefore(row, bi, 620) + 'px' }">
            <span class="lead" :style="{ width: band.items[0].x - band.x + 'px' }"></span>
            <template v-for="(it, ii) in band.items" :key="it.x">
              <div class="slot" :style="{ width: width(band.items, ii, band.end) + 'px' }">
                <span v-if="it.k === 'sep'" class="sep"></span>
                <span v-else-if="it.k === 'grip'" class="grip"></span>
                <span v-else-if="it.k === 'more'" class="more">»</span>
                <div v-else-if="it.k === 'combo'" class="combo" :style="{ width: it.w + 'px' }">
                  <span class="combo-t">{{ it.t }}</span>
                  <span class="combo-arrow"><i class="caret"></i></span>
                </div>
                <div v-else class="tool" :class="{ dis: it.dis, on: it.on }" :style="it.on ? { width: it.w + 'px' } : undefined">
                  <span class="ico-slot" :style="{ width: (it.tx ?? 0) - it.x + 'px' }"><Ico v-if="it.i" :n="it.i" /></span>
                  <span v-if="it.t">{{ it.t }}</span>
                  <i v-if="it.c" class="caret" :class="{ tight: it.tight }"></i>
                </div>
              </div>
            </template>
          </div>
        </div>

        <div class="canvas">
          <svg class="cad" width="1281" height="727" viewBox="620 223 1281 727">
            <g v-for="(set, si) in sets" :key="si" :transform="set.tf">
              <path :d="set.red" fill="none" stroke="#f00" stroke-width="3.500" />
              <path :d="set.dots" fill="none" stroke="#f00" stroke-width="3" />
              <path :d="set.yellow" fill="none" stroke="#b8a400" stroke-width="4.500" />
              <path :d="set.green" fill="none" stroke="#0f0" stroke-width="5.500" />
              <text
                v-for="(l, li) in set.text"
                :key="li"
                :x="l.x"
                :y="l.y"
                :class="l.cls"
                :transform="l.r ? `rotate(-90 ${l.x} ${l.y})` : undefined"
                text-anchor="middle"
                dominant-baseline="central"
              >{{ l.t }}</text>
            </g>
            <path d="M1034 655a12 12 0 0 1 24 0" fill="none" stroke="#c00000" stroke-width="1.200" />
            <path d="M1055 680l17-10 17 10" fill="none" stroke="#0a8a0a" stroke-width="1.200" />
            <text x="1060" y="689" class="white big">2-7</text>
            <path d="M688 887V838" stroke="#0f0" stroke-width="5" />
            <path d="M683 842l5-15 5 15z" fill="#0f0" />
            <path d="M688 887h18" stroke="#f00" stroke-width="4" />
            <path d="M700 830l6 10" stroke="#0a8a0a" stroke-width="1" />
            <path d="M1374 872l66 78M1475 950l22-19" fill="none" stroke="#0a8a0a" stroke-width="1" />
            <text x="1453" y="942" class="white" transform="rotate(40 1453 942)">15</text>
          </svg>
        </div>

        <div class="tb-row bottom">
          <div class="band coord">
            <span class="grip"></span>
            <Ico class="ortho" n="ortho" />
            <span class="ortho-t">正交</span>
            <span class="toggle on"><Ico n="toggle" :s="18" /></span>
            <span class="hidden-gap"></span>
            <span class="spin clipped"><span class="val">0</span><i class="arrows"></i></span>
            <span class="unit">mm</span>
            <span class="unit y">Y=</span>
            <span class="spin"><span class="val">0</span><i class="arrows"></i></span>
            <span class="unit">mm</span>
            <span class="sep"></span>
            <span class="l-check small"></span>
            <span class="rot">旋转</span>
            <span class="spin wide"><span class="val">0.000</span><i class="arrows"></i></span>
            <span class="unit deg">°</span>
          </div>
        </div>
      </section>
    </div>

    <footer class="status">
      <span class="cell s1 lat">X=50548 Y=33328</span>
      <span class="cell s2">层高:<span class="lat">4.54m</span></span>
      <span class="cell s3">底标高:<span class="lat">-0.04m</span></span>
      <span class="cell s4 lat">1</span>
      <span class="cell s5">按鼠标左键拉框选择柱大样边线、柱</span>
      <span class="cell s6 lat">438.5 FPS</span>
    </footer>

    <div class="upload">
      <span class="up-logo">
        <svg width="26" height="24" viewBox="0 0 26 24">
          <path d="M8.500 7a4.500 4.500 0 1 0 9 0a4.500 4.500 0 1 0-9 0zM2.500 16a4.500 4.500 0 1 0 9 0a4.500 4.500 0 1 0-9 0zM14.500 16a4.500 4.500 0 1 0 9 0a4.500 4.500 0 1 0-9 0z" fill="none" stroke="#fff" stroke-width="3" />
        </svg>
      </span>
      <span class="up-text">拖拽上传</span>
    </div>

    <div class="dialog">
      <div class="dlg-title">
        <span class="dlg-icon">
          <svg width="14" height="14" viewBox="0 0 14 14"><path d="M7 1v4M7 9v4M1 7h12M3 4v6M11 4v6" fill="none" stroke="#fff" stroke-width="1.500" /></svg>
        </span>
        <span class="dlg-name">柱大样校核，双击可跟踪到构件位置</span>
        <svg class="dlg-ctl" width="150" height="20" viewBox="0 0 150 20">
          <path d="M5 10h12" stroke="#555" />
          <path d="M64 4h11v12H64z" fill="none" stroke="#ddd" />
          <path d="M123 4l12 12M135 4l-12 12" stroke="#555" />
        </svg>
      </div>
      <div class="dlg-body">
        <div class="dlg-list">
          <div class="dl-head">
            <span class="c1">构件名称</span>
            <span class="c2">所属楼层</span>
            <span class="c3">问题描述</span>
          </div>
          <div v-for="r in dlgRows" :key="r.n" class="dl-row" :class="{ on: r.on }">
            <span class="c1">{{ r.n }}</span>
            <span class="c2">{{ r.f }}</span>
            <span class="c3">{{ r.d }}</span>
          </div>
        </div>
        <div class="dlg-side">
          <fieldset class="group">
            <legend>校核内容</legend>
            <label v-for="k in checks" :key="k.t" class="chk" :style="{ height: k.h + 'px' }">
              <span class="box">
                <svg width="14" height="14" viewBox="0 0 14 14"><path d="M2 7l4 5 6-10" fill="none" stroke="#333" stroke-width="1.300" /></svg>
              </span>
              {{ k.t }}
            </label>
          </fieldset>
        </div>
      </div>
    </div>
  </div>
</template>

<style>
html, body { margin: 0; background: #f0f0f0; overflow: hidden; }
</style>

<style scoped>
.app {
  position: relative;
  width: 1901px;
  height: 1016px;
  overflow: hidden;
  display: flex;
  flex-direction: column;
  background: #f0f0f0;
  color: #2c2c2c;
  font: 15px/20px "Noto Sans CJK SC", "Liberation Sans", sans-serif;
}
.ico { display: block; flex: none; }
.lat { font-family: "Liberation Mono", monospace; font-size: 12.5px; }

.titlebar { height: 15px; background: #fff; display: flex; overflow: hidden; position: relative; flex: none; }
.app-icon { width: 9px; height: 9px; background: #2a84d0; border-radius: 0 0 2px 0; }
.title-text { margin: -12px 0 0 11px; color: #8c8c8c; white-space: nowrap; line-height: 22px; font-size: 15.5px; }
.win-ctl { position: absolute; right: 18px; top: 0; }

.menubar { height: 35px; flex: none; display: flex; align-items: center; gap: 13px; padding-left: 5px; position: relative; margin-top: -1px; }
.menu { white-space: nowrap; }
.change { display: flex; align-items: center; gap: 4px; margin-left: -1px; }
.menu-right { position: absolute; left: 1744px; right: 0; top: 2px; height: 30px; background: #f5f5f5; display: flex; align-items: center; overflow: hidden; }
.menu-right .caret { margin-left: 35px; }
.bell { margin-left: 16px; }
.chat { margin-left: 7px; }
.suggest { margin-left: 5px; white-space: nowrap; }
.caret { display: inline-block; width: 0; height: 0; border: 3.5px solid transparent; border-top: 4px solid #222; border-bottom: 0; margin-left: 11px; flex: none; }
.caret.tight { margin-left: 6px; }

.tb-row { display: flex; flex: none; height: 32px; }
.tb-row.first { height: 39px; padding-bottom: 6px; box-sizing: border-box; }
.tb-row.thin { height: 30px; margin-bottom: 1px; }
.band { display: flex; align-items: center; background: #f6f6f6; flex: none; }
.lead { flex: none; }
.slot { flex: none; display: flex; align-items: center; height: 100%; white-space: nowrap; position: relative; }
.tool { display: flex; align-items: center; height: 100%; }
.tool.dis { color: #9b9b9b; }
.tool.white { background: linear-gradient(#fff, #fff) 0 0 / 59px 100% no-repeat; }
.tool.white .caret { margin-left: 14px; }
.tool.on { background: #d6e8f8; outline: 2px solid #4a9ee0; outline-offset: -2px; height: 28px; padding-left: 4px; box-sizing: border-box; }
.ico-slot { display: flex; align-items: center; flex: none; }
.sigma { font: 700 17px "Liberation Sans", sans-serif; margin-left: 2px; color: #111; }
.sep { width: 1px; height: 22px; background: #b8b8b8; display: block; flex: none; }
.grip { width: 2px; height: 18px; display: block; background: repeating-linear-gradient(#aaa 0 2px, transparent 2px 5px); flex: none; }
.more { font: 700 14px/12px "Liberation Sans", sans-serif; margin-top: -12px; color: #222; }
.combo { display: flex; height: 28px; align-items: center; background: #fff; flex: none; }
.combo-t { flex: 1; padding-left: 3px; overflow: hidden; white-space: nowrap; }
.combo-arrow { width: 14px; height: 100%; display: flex; align-items: center; background: #f4f4f4; flex: none; }
.combo-arrow .caret { margin-left: 3px; }

.main { flex: 1; display: flex; min-height: 0; }
.pane-head { height: 18px; flex: none; display: flex; justify-content: space-between; align-items: center; background: #efefef; border: 1px solid #b4b4b4; border-width: 1px 1px 2px; border-radius: 2px; box-sizing: border-box; font-size: 15px; line-height: 16px; white-space: nowrap; padding-right: 3px; overflow: hidden; }
.pane-ctl { display: flex; gap: 9px; align-items: center; }

.nav { width: 200px; flex: none; display: flex; flex-direction: column; padding-bottom: 3px; box-sizing: border-box; }
.nav-head span:first-child { margin-left: -2px; }
.nav-btn { height: 27px; margin-top: 2px; border: 0; border-bottom: 2px solid #c0c0c0; border-right: 1px solid #ccc; background: #efefef; color: #2c2c2c; font: inherit; flex: none; padding: 0; }
.nav-tools { height: 34px; flex: none; display: flex; align-items: center; gap: 8px; padding-left: 2px; background: #f5f5f5; }
.tree { flex: 1; background: #fff; border: solid #a8acb0; border-width: 2px 2px 2px 0; padding-top: 0; overflow: hidden; box-sizing: border-box; font-size: 15px; }
.nav-btn.foot { height: 26px; }
.node { height: 20px; display: flex; align-items: center; position: relative; white-space: nowrap; }
.node .chev { margin-left: 6px; flex: none; }
.dash { width: 5px; height: 0; border-top: 1px dotted #888; margin: 0 3px 0 5px; flex: none; }
.lv0 .node-t { margin-left: 8px; }
.lv1 { padding-left: 52px; }
.lv1 .node-t { margin-left: 7px; }
.lv1::before { content: ""; position: absolute; left: 37px; top: 0; height: 20px; border-left: 1px dotted #888; }
.lv1.last::before { height: 10px; }
.lv1::after { content: ""; position: absolute; left: 37px; top: 10px; width: 13px; border-top: 1px dotted #888; }
.lv1.guide { background: linear-gradient(#999 50%, transparent 50%) 13px 0 / 1px 3px repeat-y; }
.sel { background: linear-gradient(#eee, #eee) 48px 0 / 22px 100% no-repeat; }
.sel .node-t { background: #dcdcdc; padding: 0 5px 0 2px; margin-left: 5px; }
.panels { margin-left: 8px; }
.new-tag { font: italic 700 10px/10px "Liberation Sans", sans-serif; background: #ffe600; color: #222; padding: 0 2px; margin: -12px 0 0 2px; }

.mid { width: 410px; margin-left: 5px; flex: none; display: flex; flex-direction: column; }
.tabs { display: flex; flex: none; height: 25px; margin-top: 2px; padding-left: 2px; }
.tab { padding: 0 7px; height: 23px; background: #f3f3f3; margin-top: 2px; white-space: nowrap; line-height: 23px; }
.tab.on { background: #fff; height: 25px; margin-top: 0; padding: 0 9px; line-height: 23px; }
.sheet-pane { height: 631px; flex: none; background: #fff; padding: 3px 4px 4px 7px; box-sizing: border-box; display: flex; flex-direction: column; }
.sheet-tools { display: flex; gap: 2px; height: 30px; flex: none; border-bottom: 2px solid #e2e2e2; }
.sheet-btn { width: 71px; height: 28px; border: 1px solid #bcbcbc; background: #eee; color: #2c2c2c; font: inherit; padding: 0; flex: none; }
.sheet-btn.narrow { width: 14px; display: flex; align-items: center; justify-content: center; }
.sheet-btn.narrow .caret { margin: 0; }
.grid-box { flex: 1; border: 2px solid #c4c4c4; margin-top: 2px; background: #fff; }
.g-row { display: flex; height: 24px; font-size: 15px; }
.g-row span.g-num { width: 26px; flex: none; display: flex; align-items: center; justify-content: center; background: #f2f2f2; border-right: 1px solid #ddd; font-family: "Liberation Mono", monospace; font-size: 14px; box-sizing: border-box; }
.g-name { width: 178px; flex: none; display: flex; align-items: center; position: relative; white-space: nowrap; box-sizing: border-box; }
.g-ratio { width: 71px; flex: none; display: flex; align-items: center; padding-left: 3px; box-sizing: border-box; border-left: 1px solid #ddd; }
.head { height: 32px; margin-bottom: 1px; }
.head .g-name { justify-content: center; background: linear-gradient(#fbd898, #eec071); color: #800a70; }
.head .g-ratio { background: #f4f4f4; }
.r1 .g-name { background: #047a04; padding-left: 24px; color: #0a0a0a; }
.r1 .g-ratio { background: #047a04; color: #0a0a0a; }
.minus-box { position: absolute; left: 3px; top: 5px; width: 14px; height: 14px; background: #fff; border: 1px solid #bbb; box-sizing: border-box; }
.minus-box::after { content: ""; position: absolute; left: 2px; right: 2px; top: 5px; height: 2px; background: #222; }
.g-row.r2 span.g-num { background: #fcd9a0; color: #800a70; }
.r2 .g-name { background: #dcea1a; outline: 3px solid #808080; outline-offset: -2px; padding-left: 38px; }
.r2 .g-ratio { background: #ff0; }
.branch { position: absolute; left: 11px; top: 0; width: 19px; height: 12px; border: solid #a9b4c8; border-width: 0 0 1px 1px; }
.handle { position: absolute; right: -3px; bottom: -3px; width: 5px; height: 5px; background: #808080; }

.pane-head.second { margin-top: 10px; }
.pane-head.second span:first-child { margin-left: -2px; }
.layer-box { height: 195px; margin-top: 2px; background: #fff; border: 2px solid #a8acb0; box-sizing: border-box; padding: 0 0 0 10px; flex: none; font-size: 15px; line-height: 17px; }
.layer { display: flex; align-items: center; height: 17px; white-space: nowrap; }
.layer .dash { width: 4px; margin: 0 2px 0 3px; }
.l-check { width: 16px; height: 14px; border: 1px solid #333; box-sizing: border-box; background: #fff; flex: none; margin-right: 4px; position: relative; display: block; }
.l-check.mixed::after { content: ""; position: absolute; inset: 2px; background: #333; }

.work { flex: 1; margin-left: 5px; min-width: 0; display: flex; flex-direction: column; gap: 3px; }
.canvas { height: 727px; flex: none; background: #000; margin-top: -3px; position: relative; overflow: hidden; }
.cad { position: absolute; left: 0; top: 0; }
.cad text { font: 22px "Liberation Mono", "Noto Sans CJK SC", monospace; fill: #009a00; }
.cad text.lb { font-size: 26px; }
.cad text.md { font-size: 28px; }
.cad text.blue { fill: #0000c8; }
.cad text.white { font: 17px "Liberation Sans", sans-serif; fill: #ddd; }
.cad text.white.big { font-size: 20px; }

.tb-row.bottom { height: 40px; margin-top: -3px; }
.coord { width: 1108px; height: 40px; padding: 0 0 3px 5px; box-sizing: border-box; font-size: 15px; }
.ortho { margin-left: 6px; }
.ortho-t { margin-left: 6px; white-space: nowrap; }
.toggle { margin-left: 5px; border: 1px solid #3a8ad0; background: #e0eefa; height: 28px; display: flex; align-items: center; }
.hidden-gap { width: 653px; flex: none; }
.spin { height: 28px; width: 72px; border: 1px solid #777; box-sizing: border-box; display: flex; align-items: center; justify-content: flex-end; background: #f7f7f7; color: #9a9a9a; flex: none; font: 15px "Liberation Sans", sans-serif; position: relative; }
.spin.clipped { width: 30px; }
.spin.wide { width: 84px; margin-left: 7px; }
.val { margin-right: 20px; }
.arrows { position: absolute; right: 5px; top: 5px; height: 16px; width: 8px; background:
  linear-gradient(135deg, transparent 50%, #555 50%) 0 0 / 4px 4px no-repeat,
  linear-gradient(225deg, transparent 50%, #555 50%) 4px 0 / 4px 4px no-repeat,
  linear-gradient(45deg, transparent 50%, #555 50%) 0 12px / 4px 4px no-repeat,
  linear-gradient(315deg, transparent 50%, #555 50%) 4px 12px / 4px 4px no-repeat; }
.unit { color: #8a8a8a; margin-left: 2px; font: 16px "Liberation Sans", sans-serif; }
.unit.y { margin: 0 3px 0 12px; }
.unit.deg { margin-left: 5px; }
.coord .sep { margin: 0 5px 0 6px; }
.l-check.small { border-color: #888; width: 14px; height: 14px; margin: 0; }
.rot { margin-left: 8px; white-space: nowrap; }

.status { height: 26px; flex: none; display: flex; align-items: center; font-size: 15px; }
.cell { height: 22px; box-sizing: border-box; background: #f8f8f8; border: 1px solid #e4e4e4; line-height: 20px; padding-left: 3px; white-space: nowrap; overflow: hidden; flex: none; }
.s1 { width: 178px; padding-left: 0; }
.s2 { width: 97px; margin-left: 3px; }
.s3 { width: 121px; margin-left: 3px; }
.s4 { width: 59px; margin-left: 4px; }
.s5 { width: 1354px; margin-left: 3px; }
.s6 { width: 75px; margin-left: 4px; }

.upload { position: absolute; left: 1649px; top: 21px; width: 129px; height: 32px; border: 2px solid #5fb3ff; border-radius: 4px; box-sizing: border-box; display: flex; overflow: hidden; background: linear-gradient(90deg, #cfeafe, #e6f6ff); }
.up-logo { width: 36px; background: #1e90ff; display: flex; align-items: center; justify-content: center; flex: none; }
.up-text { flex: 1; text-align: center; color: #7cbcf0; font-size: 15px; line-height: 28px; }

.dialog { position: absolute; left: 705px; top: 687px; width: 668px; height: 329px; background: #fff; display: flex; flex-direction: column; box-shadow: 0 0 1px #999; }
.dlg-title { height: 33px; display: flex; align-items: center; flex: none; padding-left: 4px; position: relative; }
.dlg-icon { width: 20px; height: 20px; background: #1c8cf4; border-radius: 4px; display: flex; align-items: center; justify-content: center; flex: none; }
.dlg-name { margin-left: 5px; color: #8a8a8a; font-size: 15px; white-space: nowrap; }
.dlg-ctl { margin-left: auto; margin-right: 9px; }
.dlg-body { flex: 1; display: flex; min-height: 0; }
.dlg-list { width: 452px; margin-left: 3px; border: solid #a0a4a8; border-width: 2px 2px 0; box-sizing: border-box; flex: none; padding-left: 1px; }
.dl-head { height: 32px; display: flex; align-items: center; }
.dl-row { height: 21px; display: flex; align-items: center; }
.dl-row.on { background: #cce4ff; margin-right: 1px; }
.c1 { width: 82px; padding-left: 6px; box-sizing: border-box; flex: none; }
.c2 { width: 82px; padding-left: 7px; box-sizing: border-box; flex: none; }
.c3 { padding-left: 6px; }
.dl-head .c1, .dl-head .c2 { border-right: 1px solid #e2e2e2; height: 30px; line-height: 30px; }
.dl-row .c1 { font-family: "Liberation Sans", sans-serif; font-size: 14px; }
.dlg-side { flex: 1; background: #f0f0f0; padding: 0 2px 0 2px; border-right: 3px solid #b8b8b8; min-width: 0; }
.group { border: 0; border-top: 1px solid #d4d4d4; margin: 0; padding: 43px 0 0; height: 100%; box-sizing: border-box; min-width: 0; }
.group legend { padding: 0 3px; margin-left: 6px; font-size: 15px; line-height: 20px; }
.chk { display: flex; align-items: flex-start; white-space: nowrap; gap: 4px; font-size: 15px; margin-left: 30px; }
.box { width: 16px; height: 16px; border: 1px solid #444; background: #fff; box-sizing: border-box; margin-top: 2px; display: flex; align-items: center; justify-content: center; flex: none; }
</style>
